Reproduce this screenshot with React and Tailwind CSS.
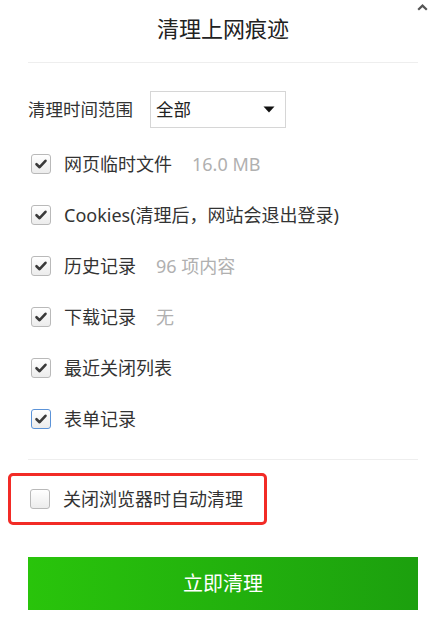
import React from 'react';

const rows = [
  { label: '网页临时文件', info: '16.0 MB', checked: true },
  { label: 'Cookies(清理后，网站会退出登录)', checked: true },
  { label: '历史记录', info: '96 项内容', checked: true },
  { label: '下载记录', info: '无', checked: true },
  { label: '最近关闭列表', checked: true },
  { label: '表单记录', checked: true, focus: true },
];

function Checkbox({ checked, focus }) {
  return (
    <span
      className={
        'flex items-center justify-center w-[20px] h-[20px] rounded-[3px] border shrink-0 bg-gradient-to-b from-white to-[#ececec] ' +
        (focus ? 'border-[#5b93d8]' : 'border-[#b9b9b9]')
      }
    >
      {checked && (
        <svg width="14" height="14" viewBox="0 0 14 14">
          <path d="M2.5 7.2 L5.6 10.2 L11.5 3.8" fill="none" stroke="#3a3a3a" strokeWidth="2.6" strokeLinecap="round" strokeLinejoin="round" />
        </svg>
      )}
    </span>
  );
}

export default function App() {
  return (
    <div className="relative w-[436px] h-[621px] bg-white text-[#333] font-['Noto_Sans','Noto_Sans_CJK_SC',sans-serif] overflow-hidden">
      <svg className="absolute left-[417px] top-[4px]" width="11" height="7" viewBox="0 0 11 7">
        <path d="M1.2 5.8 L5.5 1.6 L9.8 5.8" fill="none" stroke="#555" strokeWidth="2.2" />
      </svg>

      <div className="pl-[28px] pr-[18px]">
        <div className="pt-[17px] pb-[23px] text-center text-[22px] leading-[22px] text-[#222]">清理上网痕迹</div>
        <div className="h-px bg-[#eeeeee]" />

        <div className="mt-[28px] flex items-center h-[37px]">
          <span className="text-[17.5px] leading-none text-[#333]">清理时间范围</span>
          <div className="ml-[17px] w-[136px] h-[37px] border border-[#d6d6d6] flex items-center justify-between pl-[5px] pr-[10px]">
            <span className="text-[17.5px] leading-none text-[#222]">全部</span>
            <svg width="12" height="7" viewBox="0 0 12 7">
              <path d="M0.5 0.5 H11.5 L6 6.5 Z" fill="#111" />
            </svg>
          </div>
        </div>

        <div className="mt-[10px]">
          {rows.map((r) => (
            <div key={r.label} className="flex items-center h-[51px] pl-[3px]">
              <Checkbox checked={r.checked} focus={r.focus} />
              <span className="ml-[13px] text-[18px] leading-none text-[#333]">{r.label}</span>
              {r.info && <span className="ml-[20px] text-[18px] leading-none text-[#b0b0b0]">{r.info}</span>}
            </div>
          ))}
        </div>

        <div className="mt-[15px] h-px bg-[#eeeeee]" />

        <div className="mt-[13px] -ml-[20px] w-[259px] h-[52px] border-[3px] border-[#f22b26] rounded-[5px] flex items-center pl-[19px]">
          <Checkbox checked={false} />
          <span className="ml-[13px] text-[18px] leading-none text-[#333]">关闭浏览器时自动清理</span>
        </div>

        <button className="mt-[32px] w-[390px] h-[53px] flex items-center justify-center bg-gradient-to-r from-[#29c40b] to-[#1ca00e] text-white text-[20px] leading-none">
          立即清理
        </button>
      </div>
    </div>
  );
}
